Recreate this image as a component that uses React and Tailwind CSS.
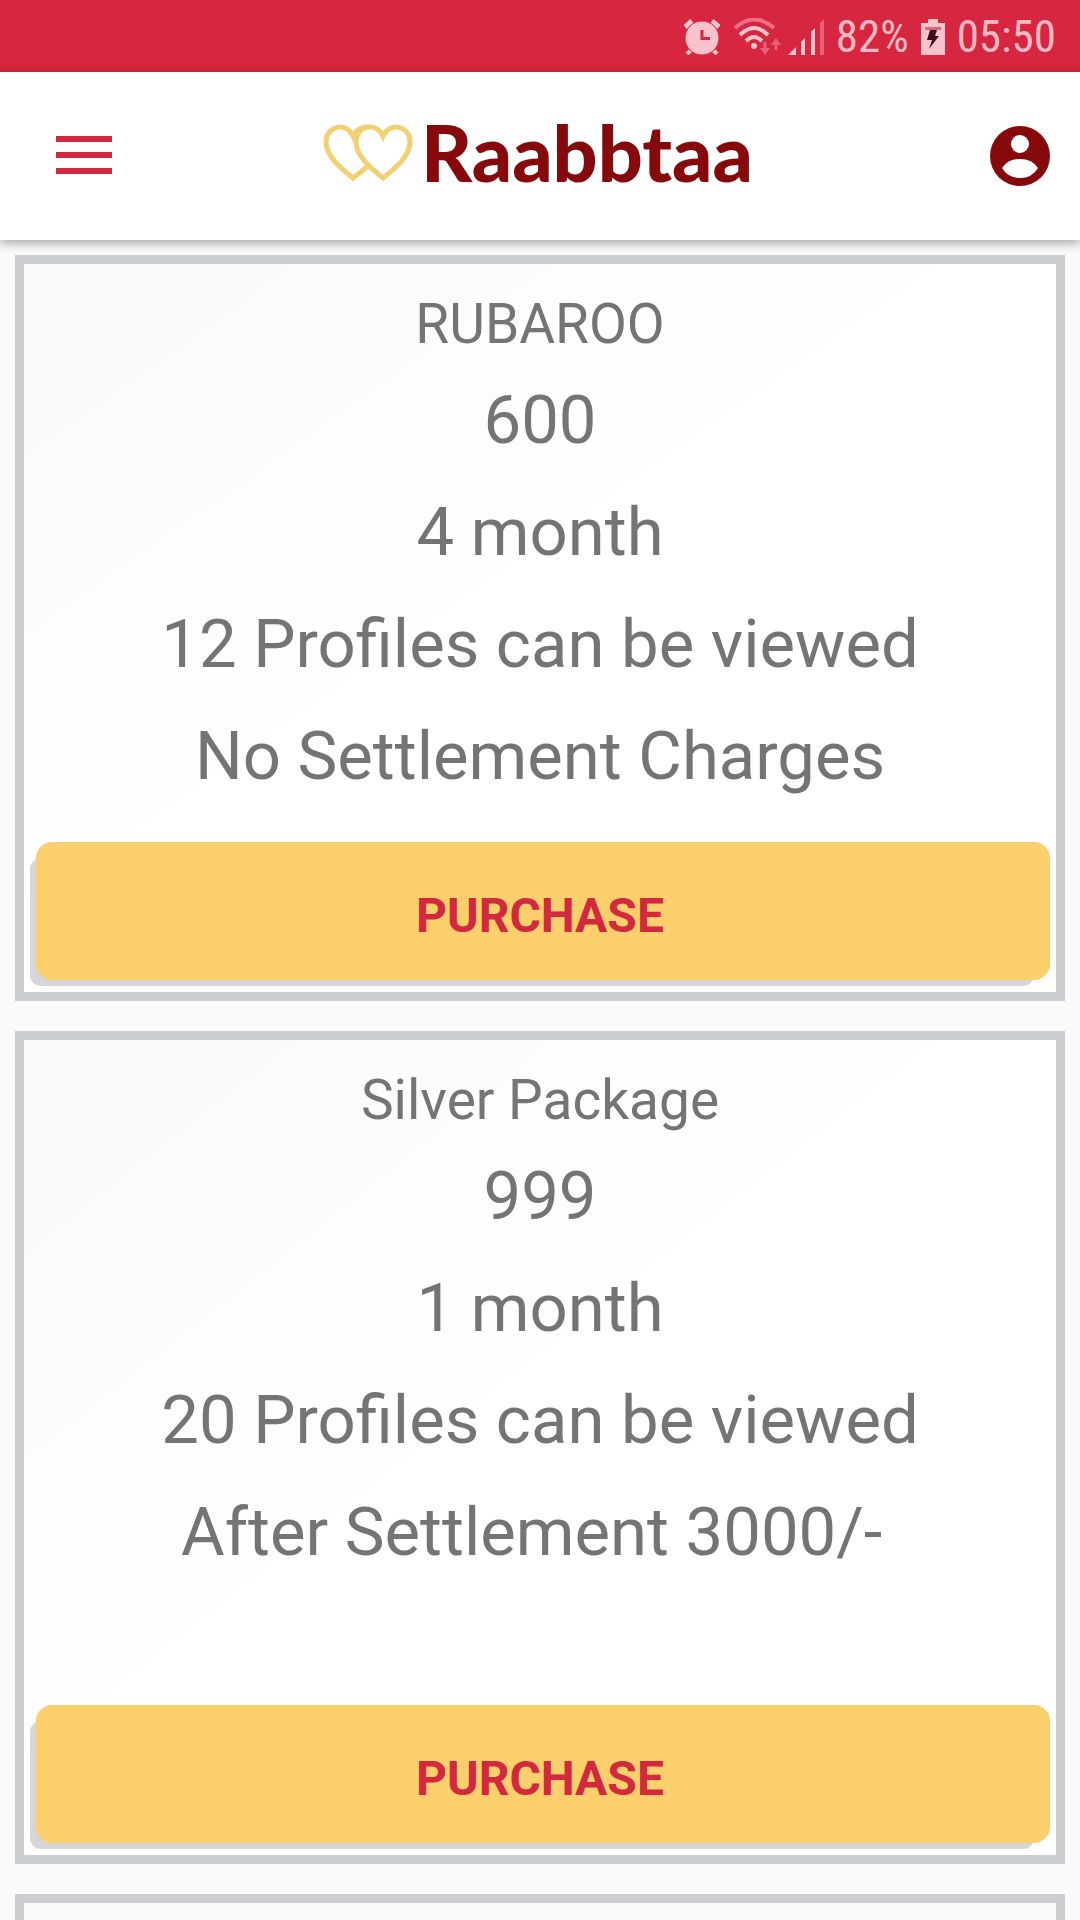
import React from "react";

const packages = [
  {
    name: "RUBAROO",
    price: "600",
    duration: "4 month",
    profiles: "12 Profiles can be viewed",
    settlement: "No Settlement Charges",
    button: "mt-[30px]",
  },
  {
    name: "Silver Package",
    price: "999",
    duration: "1 month",
    profiles: "20 Profiles can be viewed",
    settlement: "After Settlement 3000/-\u00a0",
    button: "mt-[117px]",
  },
];

// Status bar icons
const AlarmIcon = () => (
  <svg viewBox="0 0 36 36" className="h-9 w-9" aria-hidden>
    <path d="M9 29l-6 6M27 29l6 6" stroke="#f9c3cd" strokeWidth="4" />
    <path d="M1 8l7-6M28 2l7 6" stroke="#f9c3cd" strokeWidth="5" />
    <circle cx="18" cy="19" r="17" fill="#f9c3cd" stroke="#d7263f" strokeWidth="1" />
    <path d="M18 11v8.500h8" fill="none" stroke="#d7263f" strokeWidth="3" />
  </svg>
);

const WifiIcon = () => (
  <svg viewBox="0 0 48 38" className="h-[38px] w-12" fill="none" aria-hidden>
    <path d="M1 10Q20-7 40 10" stroke="#ee7085" strokeWidth="4" />
    <path d="M6 17Q20 3 34 17" stroke="#fbc6cf" strokeWidth="4" />
    <path d="M12 23Q20 15 28 23" stroke="#fbc6cf" strokeWidth="4" />
    <circle cx="20" cy="28" r="3" fill="#fbc6cf" />
    <path d="M31 24v8M42 32v-8" stroke="#ea6079" strokeWidth="3" />
    <path d="M26 30h10l-5 7zM37 27h10l-5-7z" fill="#ea6079" />
  </svg>
);

const SignalIcon = () => (
  <svg viewBox="0 0 36 36" className="h-9 w-9" fill="#fbc6cf" aria-hidden>
    <path d="M0 36l8-8v8zM13 23l4-4v17h-4zM23 13l4-4v27h-4z" />
    <path d="M32 4l4-4v36h-4z" fill="#ea6079" />
  </svg>
);

const BatteryIcon = () => (
  <svg viewBox="0 0 24 36" className="h-9 w-6" aria-hidden>
    <path d="M7 0h10v4h7v32H0V4h7z" fill="#f9c3cd" />
    <path d="M4 8h16v3H4z" fill="#d4697c" />
    <path d="M9 11h7l-2 6h4L8 30l3-9H6z" fill="#3d1019" />
  </svg>
);

const Hearts = () => (
  <svg viewBox="0 0 90 58" className="h-[58px] w-[90px]" fill="none" stroke="#f2d072" strokeWidth="5" aria-hidden>
    <path d="M30 54C20 46 3 33 3 18C3 1 24-2 30 12C36-2 59 1 59 18C59 33 40 46 30 54z" />
    <path d="M60 54C50 46 33 33 33 18C33 1 54-2 60 12C66-2 87 1 87 18C87 33 70 46 60 54z" fill="#fff" />
  </svg>
);

const StatusBar = () => (
  <div className="flex h-[72px] shrink-0 items-center justify-end bg-[#d7263f] pt-[2px] pr-6 text-[#f9b9c4]">
    <AlarmIcon />
    <span className="ml-[14px]">
      <WifiIcon />
    </span>
    <span className="ml-[6px]">
      <SignalIcon />
    </span>
    <span className="ml-3 font-['Roboto_Condensed',Roboto,sans-serif] text-[45px]">82%</span>
    <span className="mx-3">
      <BatteryIcon />
    </span>
    <span className="font-['Roboto_Condensed',Roboto,sans-serif] text-[45px]">05:50</span>
  </div>
);

const Header = () => (
  <header className="relative z-10 grid h-[168px] shrink-0 grid-cols-[1fr_auto_1fr] items-center bg-white shadow-[0_3px_10px_rgba(0,0,0,0.35)]">
    <button type="button" aria-label="Menu" className="ml-14 flex flex-col gap-[10px] justify-self-start pb-[2px]">
      <span className="h-[6px] w-14 bg-[#d2293f]" />
      <span className="h-[6px] w-14 bg-[#d2293f]" />
      <span className="h-[6px] w-14 bg-[#d2293f]" />
    </button>
    <a href="#" className="flex items-center gap-2 pr-1 pb-[6px]">
      <Hearts />
      <span className="pb-1 font-[Lato,sans-serif] text-[79px] leading-none font-black text-[#860a0c]">Raabbtaa</span>
    </a>
    <button type="button" aria-label="Account" className="mr-[30px] justify-self-end">
      <svg viewBox="0 0 60 60" className="h-[60px] w-[60px]" aria-hidden>
        <circle cx="30" cy="30" r="30" fill="#860a0c" />
        <circle cx="30" cy="18" r="9" fill="#fff" />
        <path d="M12 42Q18 33 30 33T48 42Q42 52 30 52T12 42z" fill="#fff" />
      </svg>
    </button>
  </header>
);

const PackageCard = ({ item }) => (
  <section className="shrink-0 border-[9px] border-[#cccdd1] bg-linear-to-br from-[#f9f9f9] to-white to-50% pt-7 pb-3 text-center text-[#747474]">
    <h2 className="mb-2 text-[55px] leading-[64px]">{item.name}</h2>
    <div className="text-[67px] leading-[112px]">
      <p>{item.price}</p>
      <p>{item.duration}</p>
      <p>{item.profiles}</p>
      <p>{item.settlement}</p>
    </div>
    <div className={`pr-[6px] pl-3 ${item.button}`}>
      <button
        type="button"
        className="block h-[138px] w-full rounded-2xl bg-[#facf6c] pt-[10px] pr-[6px] text-[48px] font-bold text-[#d2293f] shadow-[-11px_11px_0_-5px_#d6d6d6]"
      >
        PURCHASE
      </button>
    </div>
  </section>
);

export default function App() {
  return (
    <div className="flex h-screen flex-col overflow-hidden bg-[#fafafa] font-[Roboto,sans-serif]">
      <StatusBar />
      <Header />
      <main className="flex min-h-0 flex-1 flex-col gap-[30px] overflow-y-auto px-[15px] pt-[15px] [scrollbar-width:none]">
        {packages.map((item) => (
          <PackageCard key={item.name} item={item} />
        ))}
        <section className="h-96 shrink-0 border-[9px] border-[#cccdd1] bg-[#f9f9f9]" />
      </main>
    </div>
  );
}
